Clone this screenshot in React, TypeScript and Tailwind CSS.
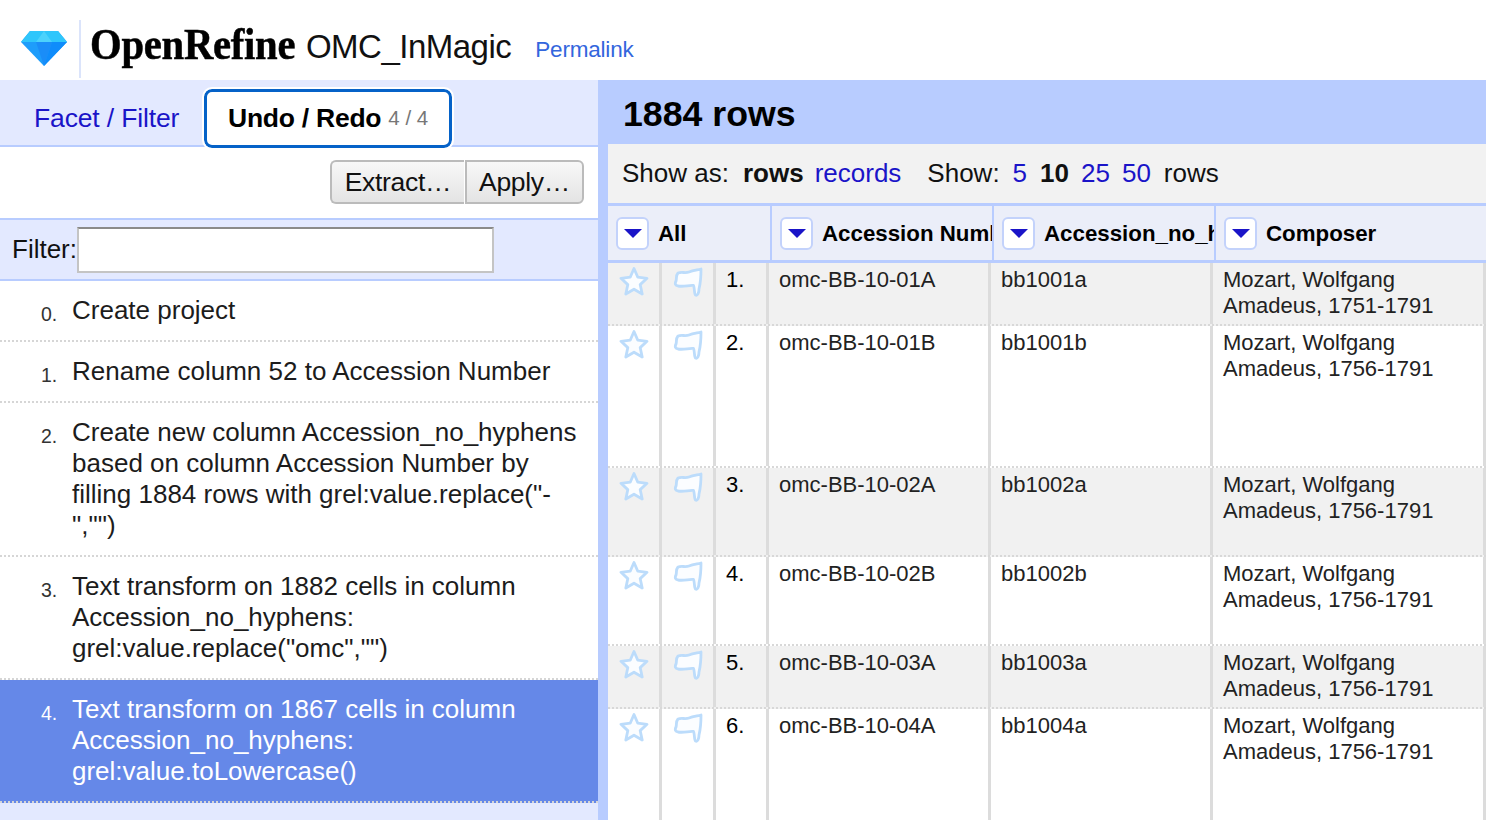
const sans = { fontFamily: '"Liberation Sans", Arial, sans-serif' }

interface HistoryEntry {
  index: number
  lines: string[]
}

interface ProjectRow {
  index: number
  accession: string
  plain: string
  composer: string[]
  height: string
}

const historyEntries: HistoryEntry[] = [
  { index: 0, lines: ['Create project'] },
  { index: 1, lines: ['Rename column 52 to Accession Number'] },
  {
    index: 2,
    lines: [
      'Create new column Accession_no_hyphens',
      'based on column Accession Number by',
      'filling 1884 rows with grel:value.replace("-',
      '","")',
    ],
  },
  {
    index: 3,
    lines: ['Text transform on 1882 cells in column', 'Accession_no_hyphens:', 'grel:value.replace("omc","")'],
  },
]

const rows: ProjectRow[] = [
  { index: 1, accession: 'omc-BB-10-01A', plain: 'bb1001a', composer: ['Mozart, Wolfgang', 'Amadeus, 1751-1791'], height: 'h-[63px]' },
  { index: 2, accession: 'omc-BB-10-01B', plain: 'bb1001b', composer: ['Mozart, Wolfgang', 'Amadeus, 1756-1791'], height: 'h-[142px]' },
  { index: 3, accession: 'omc-BB-10-02A', plain: 'bb1002a', composer: ['Mozart, Wolfgang', 'Amadeus, 1756-1791'], height: 'h-[89px]' },
  { index: 4, accession: 'omc-BB-10-02B', plain: 'bb1002b', composer: ['Mozart, Wolfgang', 'Amadeus, 1756-1791'], height: 'h-[89px]' },
  { index: 5, accession: 'omc-BB-10-03A', plain: 'bb1003a', composer: ['Mozart, Wolfgang', 'Amadeus, 1756-1791'], height: 'h-[63px]' },
  { index: 6, accession: 'omc-BB-10-04A', plain: 'bb1004a', composer: ['Mozart, Wolfgang', 'Amadeus, 1756-1791'], height: 'h-[140px]' },
]

function Diamond() {
  return (
    <svg width="46" height="36" viewBox="0 0 46 36" className="shrink-0">
      <polygon points="9,1 37,1 46,12 23,36 0,12" fill="#1e9dfb" />
      <polygon points="9,1 37,1 46,12 0,12" fill="#2fc6fb" />
      <polygon points="15,12 31,12 23,36" fill="#1a8df8" />
      <polygon points="31,12 46,12 23,36" fill="#0f8cfb" />
      <polygon points="15,12 23,1 31,12" fill="#4cd2fc" />
    </svg>
  )
}

function StarIcon() {
  return (
    <svg width="32" height="32" viewBox="0 0 32 32" className="block blur-[0.4px]">
      <polygon
        points="16,2.5 19.8,11.2 29,12.3 22.2,18.6 24.2,28 16,23.2 7.8,28 9.8,18.6 3,12.3 12.2,11.2"
        fill="#fbfdff"
        stroke="#bcdcfb"
        strokeWidth="2.8"
        strokeLinejoin="round"
      />
    </svg>
  )
}

function FlagIcon() {
  return (
    <svg width="32" height="32" viewBox="0 0 32 32" className="block blur-[0.4px]">
      <path
        d="M6 7 C10 5.5 13 7.5 17 6 C21 4.5 25 4 29 3 C29 10 28.5 17 27 23 C27 27 25.5 30 23.5 29 C22 28 23 23 21.5 19.5 C17 19 12 21 6 20 C3.5 19.5 2.5 18 4 15 C5 12 3.5 10 6 7 Z"
        fill="#fbfdff"
        stroke="#bcdcfb"
        strokeWidth="2.8"
        strokeLinejoin="round"
      />
    </svg>
  )
}

function ColumnMenu() {
  return (
    <span className="flex h-[33px] w-[33px] shrink-0 items-center justify-center rounded-[6px] border-2 border-[#c3d2fb] bg-white">
      <span className="h-0 w-0 border-x-[9px] border-t-[9px] border-x-transparent border-t-[#1a14c8]" />
    </span>
  )
}

function ColumnHeader({ label, width }: { label: string; width: string }) {
  return (
    <div className={`flex h-full shrink-0 items-center gap-[9px] overflow-hidden border-r-2 border-[#b8ccff] pl-[8px] ${width}`}>
      <ColumnMenu />
      <span className="mt-[2px] whitespace-nowrap text-[22.3px] font-bold text-black">{label}</span>
    </div>
  )
}

function HistoryItem({ entry }: { entry: HistoryEntry }) {
  return (
    <div className="flex border-b-2 border-dotted border-[#d6d6d6] py-[14px] pl-[41px]">
      <span className="h-[31px] w-[31px] shrink-0 pt-[4px] text-[19.5px] leading-[31px] text-[#333]">{entry.index}.</span>
      <div className="text-[26px] leading-[31px] text-[#1c1c1c]">
        {entry.lines.map((line) => (
          <div key={line} className="whitespace-nowrap">
            {line}
          </div>
        ))}
      </div>
    </div>
  )
}

function DataRow({ row }: { row: ProjectRow }) {
  const shaded = row.index % 2 === 1
  const cell = 'h-full shrink-0 border-r-[3px] border-[#dcdcdc]'
  return (
    <div className={`flex w-full border-b-2 border-dotted border-[#d8d8d8] ${row.height} ${shaded ? 'bg-[#f1f1f1]' : 'bg-white'}`}>
      <div className={`${cell} w-[54px] pl-[10px] pt-[3px]`}>
        <StarIcon />
      </div>
      <div className={`${cell} w-[54px] pl-[10px] pt-[3px]`}>
        <FlagIcon />
      </div>
      <div className={`${cell} w-[53px] pl-[10px] pt-[4px] text-black`}>{row.index}.</div>
      <div className={`${cell} w-[222px] pl-[10px] pt-[4px]`}>{row.accession}</div>
      <div className={`${cell} w-[222px] pl-[10px] pt-[4px]`}>{row.plain}</div>
      <div className={`${cell} w-[273px] pl-[10px] pt-[4px]`}>
        {row.composer.map((line) => (
          <div key={line}>{line}</div>
        ))}
      </div>
    </div>
  )
}

export default function App() {
  return (
    <div className="flex h-[820px] w-[1486px] flex-col overflow-hidden bg-white" style={sans}>
      {/* Header: logo + project name */}
      <header className="flex h-[80px] shrink-0 items-center pl-[21px] pt-[16px]">
        <Diamond />
        <div className="ml-[12px] mt-[2px] h-[58px] w-[2px] bg-[#dbe4fb]" />
        <span
          className="ml-[9px] mr-[-16px] mt-[-6px] origin-left scale-x-[0.925] text-[44px] font-bold leading-none tracking-[-0.3px] text-black [-webkit-text-stroke:0.5px_black]"
          style={{ fontFamily: '"Liberation Serif", "Times New Roman", serif' }}
        >
          OpenRefine
        </span>
        <span className="ml-[10px] mt-[-4px] text-[33px] leading-none tracking-[-0.5px] text-[#111]">OMC_InMagic</span>
        <a className="ml-[24px] mt-[4px] text-[22.5px] leading-none tracking-[-0.2px] text-[#3366dd]">Permalink</a>
      </header>

      <div className="flex min-h-0 flex-1">
        {/* Left panel: history */}
        <aside className="flex w-[598px] shrink-0 flex-col bg-[#e3e9ff]">
          <div className="relative flex h-[67px] shrink-0 border-b-2 border-[#b8ccff] pl-[34px]">
            <a className="mt-[22px] text-[26.5px] leading-[32px] tracking-[-0.15px] text-[#1a14c8]">Facet / Filter</a>
            <div className="absolute left-[204px] top-[9px] flex h-[59px] w-[248px] items-center rounded-[8px] border-[3px] border-[#0562c8] bg-white pl-[21px] outline-2 outline-white">
              <span className="text-[26.5px] font-bold tracking-[-0.25px] text-black">Undo / Redo</span>
              <span className="ml-[7px] text-[20.5px] text-[#777]">4 / 4</span>
            </div>
          </div>

          <div className="flex h-[71px] shrink-0 items-start justify-end bg-white pr-[14px] pt-[13px]">
            <button className="h-[44px] w-[134px] rounded-l-[6px] border-2 border-r-0 border-[#bbbbbb] bg-gradient-to-b from-[#f8f8f8] to-[#e4e4e4] text-[26.5px] leading-none tracking-[-0.3px] text-[#111]">
              Extract…
            </button>
            <button className="ml-[1px] h-[44px] w-[119px] rounded-r-[6px] border-2 border-[#bbbbbb] bg-gradient-to-b from-[#f8f8f8] to-[#e4e4e4] text-[26.5px] leading-none tracking-[-0.3px] text-[#111]">
              Apply…
            </button>
          </div>

          <div className="flex h-[63px] shrink-0 items-center border-y-2 border-[#b8ccff] pl-[12px]">
            <span className="text-[26px] text-[#111]">Filter:</span>
            <input className="h-[46px] w-[417px] border-2 border-[#c4c4c4] border-t-[#8a8a8a] bg-white" />
          </div>

          <div className="bg-white">
            {historyEntries.map((entry) => (
              <HistoryItem key={entry.index} entry={entry} />
            ))}
          </div>

          {/* Current history step */}
          <div className="flex h-[123px] shrink-0 border-b-2 border-dotted border-[#d6d6d6] bg-[#6588e8] pl-[41px] pt-[14px] text-white">
            <span className="h-[31px] w-[31px] shrink-0 pt-[4px] text-[19.5px] leading-[31px]">4.</span>
            <div className="text-[26px] leading-[31px]">
              <div>Text transform on 1867 cells in column</div>
              <div>Accession_no_hyphens:</div>
              <div>grel:value.toLowercase()</div>
            </div>
          </div>
        </aside>

        {/* Right panel: data table */}
        <main className="flex min-w-0 flex-1 flex-col bg-[#b8ccff]">
          <div className="flex h-[64px] shrink-0 items-center pl-[25px] pt-[6px]">
            <h1 className="text-[35.7px] font-bold leading-none text-black">1884 rows</h1>
          </div>

          <div className="ml-[10px] flex min-h-0 flex-1 flex-col">
            <div className="flex h-[59px] shrink-0 items-center bg-[#f2f2f2] pl-[14px] text-[26px] text-[#111]">
              <span>Show as:</span>
              <span className="ml-[14px] font-bold">rows</span>
              <a className="ml-[11px] text-[#1a14c8]">records</a>
              <span className="ml-[26px]">Show:</span>
              <a className="ml-[13px] text-[#1a14c8]">5</a>
              <span className="ml-[13px] font-bold">10</span>
              <a className="ml-[12px] text-[#1a14c8]">25</a>
              <a className="ml-[12px] text-[#1a14c8]">50</a>
              <span className="ml-[13px]">rows</span>
            </div>

            <div className="flex h-[60px] shrink-0 border-y-[3px] border-[#b8ccff] bg-[#ebeef9]">
              <ColumnHeader label="All" width="w-[164px]" />
              <ColumnHeader label="Accession Number" width="w-[222px]" />
              <ColumnHeader label="Accession_no_hyphens" width="w-[222px]" />
              <div className="flex h-full items-center gap-[9px] pl-[8px]">
                <ColumnMenu />
                <span className="mt-[2px] text-[22.3px] font-bold text-black">Composer</span>
              </div>
            </div>

            <div className="min-h-0 flex-1 overflow-hidden bg-white text-[22px] leading-[26px] text-[#222]">
              {rows.map((row) => (
                <DataRow key={row.index} row={row} />
              ))}
            </div>
          </div>
        </main>
      </div>
    </div>
  )
}
